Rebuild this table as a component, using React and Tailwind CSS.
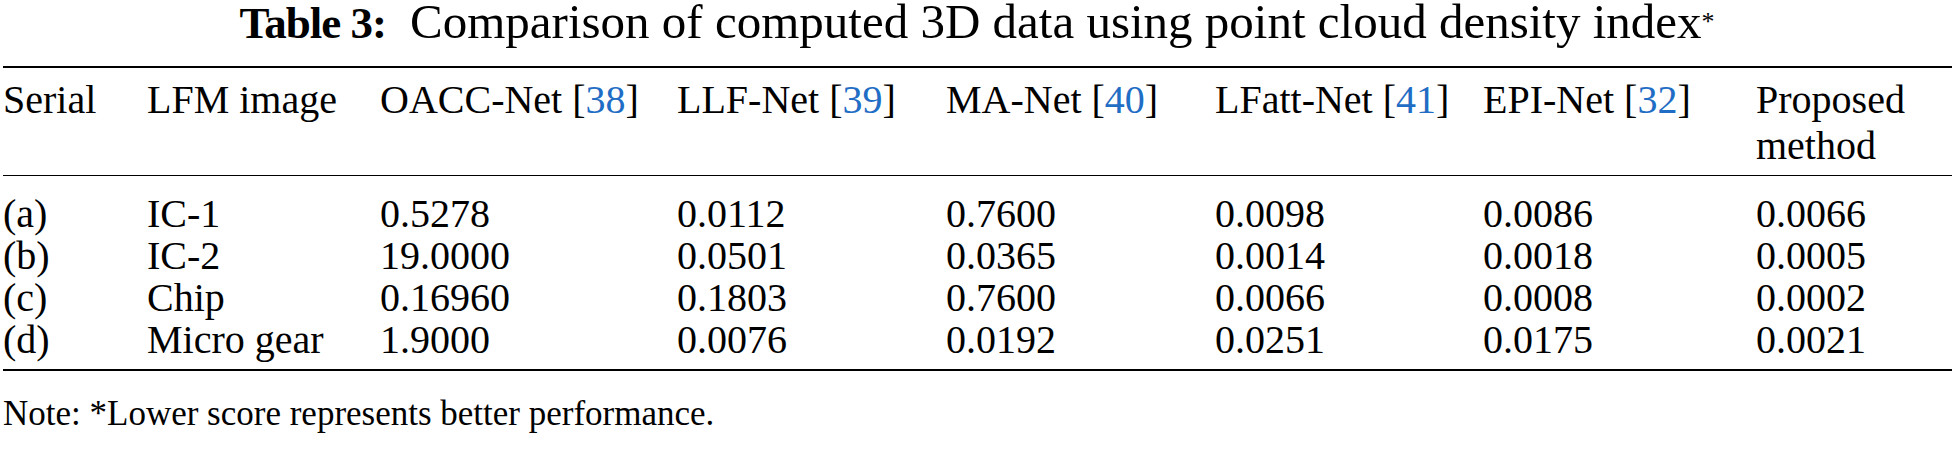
import React from 'react';

const grid = "grid grid-cols-[144px_233px_297px_269px_269px_268px_273px_1fr]";

const headers = [
  ['Serial'],
  ['LFM image'],
  ['OACC-Net', '38'],
  ['LLF-Net', '39'],
  ['MA-Net', '40'],
  ['LFatt-Net', '41'],
  ['EPI-Net', '32'],
];

const rows = [
  ['(a)', 'IC-1', '0.5278', '0.0112', '0.7600', '0.0098', '0.0086', '0.0066'],
  ['(b)', 'IC-2', '19.0000', '0.0501', '0.0365', '0.0014', '0.0018', '0.0005'],
  ['(c)', 'Chip', '0.16960', '0.1803', '0.7600', '0.0066', '0.0008', '0.0002'],
  ['(d)', 'Micro gear', '1.9000', '0.0076', '0.0192', '0.0251', '0.0175', '0.0021'],
];

export default function App() {
  return (
    <div className="w-[1954px] h-[454px] bg-white text-black font-['Liberation_Serif',serif] overflow-hidden">
      <div className="text-center text-[49px] leading-[44px] whitespace-nowrap">
        <span className="font-bold text-[45px] tracking-[-1px]">Table 3:</span>
        <span className="ml-[24px]">Comparison of computed 3D data using point cloud density index</span>
        <span className="inline-block align-top relative top-[9px] text-[26px] leading-none">*</span>
      </div>

      <div className="pl-[3px] pr-[2px] mt-[21px]">
        <div className="h-[2px] bg-black" />

        <div className={`${grid} text-[40px] leading-[46px] pt-[9px] pb-[6px]`}>
          {headers.map(([name, ref]) => (
            <div key={name} className="whitespace-nowrap">
              {name}
              {ref && (
                <>
                  {' '}[<span className="text-[#1f6dc4]">{ref}</span>]
                </>
              )}
            </div>
          ))}
          <div>Proposed<br />method</div>
        </div>

        <div className="h-[1px] bg-black" />

        <div className="pt-[17px] pb-[8px] text-[40px] leading-[42px]">
          {rows.map((r) => (
            <div key={r[0]} className={grid}>
              {r.map((c, i) => (
                <div key={i} className="whitespace-nowrap">{c}</div>
              ))}
            </div>
          ))}
        </div>

        <div className="h-[2px] bg-black" />

        <div className="mt-[23px] text-[35px] leading-[40px]">
          Note: *Lower score represents better performance.
        </div>
      </div>
    </div>
  );
}
